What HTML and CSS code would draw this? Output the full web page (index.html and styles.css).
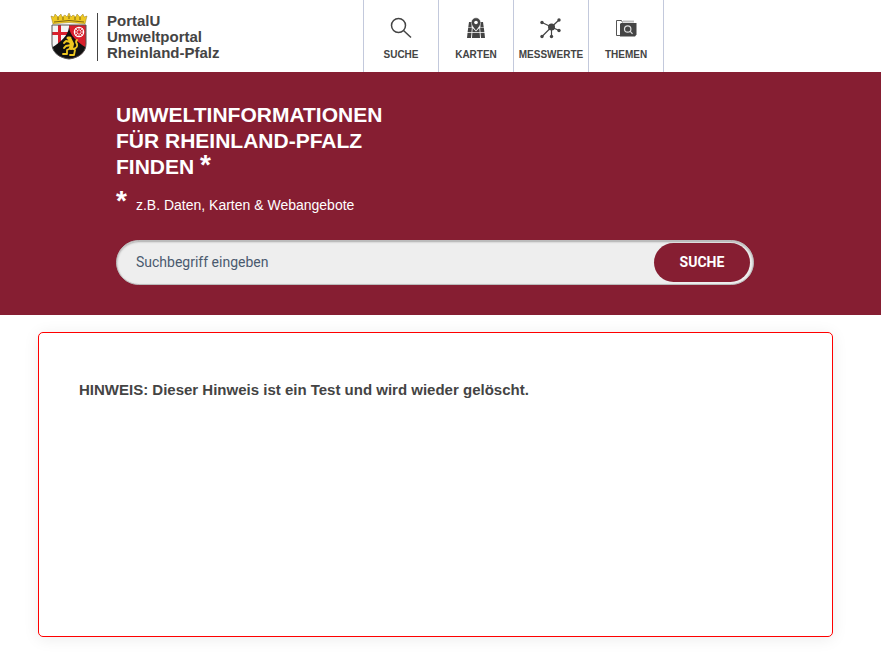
FILE: index.html
```html
<!DOCTYPE html>
<html lang="de">
<head>
<meta charset="utf-8">
<meta name="viewport" content="width=device-width, initial-scale=1">
<title>PortalU Umweltportal Rheinland-Pfalz</title>
<link rel="stylesheet" href="styles.css">
</head>
<body>
<header class="header">
  <a class="brand" href="#">
    <svg class="crest" viewBox="0 1 38 48" aria-hidden="true">
      <defs>
        <clipPath id="shield"><path d="M2 13H36V32C36 41 28 46 19 47C10 46 2 41 2 32Z"/></clipPath>
      </defs>
      <g clip-path="url(#shield)">
        <path fill="#f4f4f4" d="M0 12H19V48H0Z"/>
        <path fill="#d8202c" d="M19 12H38V48H19ZM8 12H11V48H8ZM0 20H19V23H0Z"/>
        <path fill="#111" d="M19 15C18 24 10 31 1 36V48H37V36C28 31 20 24 19 15Z"/>
      </g>
      <path fill="none" stroke="#555" stroke-width="1" d="M2 13H36V32C36 41 28 46 19 47C10 46 2 41 2 32Z"/>
      <g fill="none" stroke="#fff"><circle cx="29" cy="20" r="4.600" stroke-width="1.300"/><path stroke-width=".8" d="M29 15V25M24 20H34M25.500 16.500L32.500 23.500M32.500 16.500L25.500 23.500"/></g>
      <circle cx="29" cy="20" r="1.200" fill="#d8202c"/>
      <path fill="#efc820" stroke="#806810" stroke-width=".4" d="M3 12L1 4L4 5L5 2L8 5L11 2L12 5L15 3L17 5L19 1L21 5L23 3L26 5L27 2L30 5L33 2L34 5L37 4L35 12Q19 9 3 12Z"/>
      <path fill="none" stroke="#6e590e" stroke-width=".9" d="M4 10Q19 7 34 10M8 5V8M13 5V8M19 4V7M25 5V8M30 5V8"/>
      <g fill="none" stroke="#efc820" stroke-linecap="round" stroke-linejoin="round">
        <path stroke-width="4" d="M20 28L22 32L21 36"/>
        <path stroke-width="1.800" d="M21 30L16 29L14 31M21 33L16 34L14 36M21 36L17 38L17 42L13 42M22 36L25 38L24 43H20M23 37Q28 36 27 32Q25 30 27 28"/>
        <path stroke-width="3" d="M18 26H20"/>
      </g>
    </svg>
    <span class="brand-name">PortalU<br>Umweltportal<br>Rheinland-Pfalz</span>
  </a>
  <nav class="nav" aria-label="Hauptnavigation">
    <a class="nav-item" href="#">
      <svg class="nav-icon" viewBox="0 0 22 22" aria-hidden="true"><g fill="none" stroke="#444" stroke-width="1.500"><circle cx="8.500" cy="8.500" r="7"/><path d="M13.500 13.500L21 20.500"/></g></svg>
      <span>SUCHE</span>
    </a>
    <a class="nav-item" href="#">
      <svg class="nav-icon" viewBox="0 0 22 22" aria-hidden="true">
        <path fill="#444" d="M4 5H7L6.500 10H3.300ZM15 5H18L18.700 10H15.500ZM3.200 10.600H6.900L6.500 15.200H2.600ZM15.100 10.600H18.800L19.400 15.200H15.500ZM2.500 16H6.500L6 21H2ZM7.300 16H14.700L15 21H7ZM15.500 16H19.500L20 21H16ZM7.700 11L11 14.500L14.300 11L14.700 15.200H7.300Z"/>
        <path fill="#444" stroke="#fff" stroke-width=".5" d="M11 14C8 10 6.300 8 6.300 5.500A4.700 4.700 0 0 1 15.700 5.500C15.700 8 14 10 11 14Z"/>
        <circle cx="11" cy="5.500" r="1.800" fill="#fff"/>
      </svg>
      <span>KARTEN</span>
    </a>
    <a class="nav-item" href="#">
      <svg class="nav-icon" viewBox="0 0 22 22" aria-hidden="true">
        <path stroke="#444" stroke-width="1.200" d="M11.500 10L2 5.500M11.500 10L19 3M11.500 10L19 13.500M11.500 10V19.500M11.500 10L2 19.500"/>
        <g fill="#444"><circle cx="11.500" cy="10" r="3.500"/><circle cx="2" cy="5.500" r="1.700"/><circle cx="19" cy="3" r="1.700"/><circle cx="19" cy="13.500" r="1.700"/><circle cx="11.500" cy="19.500" r="1.700"/><circle cx="2" cy="19.500" r="1.700"/></g>
      </svg>
      <span>MESSWERTE</span>
    </a>
    <a class="nav-item" href="#">
      <svg class="nav-icon" viewBox="0 0 22 22" aria-hidden="true">
        <path fill="#bbb" d="M8 3.500H19V5.500H8Z"/>
        <path fill="none" stroke="#555" stroke-width="1" d="M6 18.500H1.500V3.500H6.500L7.500 5.500"/>
        <path fill="#444" d="M6 6H21.500V17.500L20 19.500H5V7Z"/>
        <g fill="none" stroke="#ddd" stroke-width="1.200"><circle cx="12.700" cy="12" r="3.200"/><path d="M15 14.200L17.500 16.800"/></g>
      </svg>
      <span>THEMEN</span>
    </a>
  </nav>
</header>
<main>
  <section class="hero">
    <h1 class="hero-title">UMWELTINFORMATIONEN<br>FÜR RHEINLAND-PFALZ<br>FINDEN <span class="star">*</span></h1>
    <p class="hero-note"><span class="star">*</span><span>z.B. Daten, Karten &amp; Webangebote</span></p>
    <form class="search">
      <input class="search-input" type="text" placeholder="Suchbegriff eingeben" aria-label="Suchbegriff eingeben">
      <button class="search-button" type="button">SUCHE</button>
    </form>
  </section>
  <section class="notice">
    <p>HINWEIS: Dieser Hinweis ist ein Test und wird wieder gelöscht.</p>
  </section>
</main>
</body>
</html>
```
FILE: styles.css
```css
* {
  box-sizing: border-box;
}

body {
  margin: 0;
  background: #fff;
  color: #444;
  font-family: "Liberation Sans", Arial, sans-serif;
}

a {
  color: inherit;
  text-decoration: none;
}

.header {
  display: flex;
  height: 72px;
  padding-left: 50px;
}

.brand {
  display: flex;
  align-items: flex-start;
  width: 313px;
  padding-top: 13px;
}

.crest {
  width: 38px;
  height: 48px;
}

.brand-name {
  margin-left: 9px;
  padding-left: 9px;
  border-left: 1px solid #444;
  font-size: 15px;
  font-weight: 700;
  line-height: 16px;
}

.nav {
  display: flex;
  border-left: 1px solid #c3c9dc;
}

.nav-item {
  display: flex;
  flex-direction: column;
  align-items: center;
  gap: 10px;
  width: 75px;
  padding-top: 17px;
  border-right: 1px solid #c3c9dc;
  font-size: 10px;
  font-weight: 700;
  line-height: 12px;
}

.nav-icon {
  width: 22px;
  height: 22px;
}

.hero {
  padding: 30px 127px 30px 116px;
  background: #861e32;
  color: #fff;
}

.hero-title {
  margin: 0;
  font-size: 21px;
  font-weight: 700;
  line-height: 26px;
}

.star {
  font-size: 28px;
  font-weight: 700;
  line-height: 20px;
}

.hero-note {
  display: flex;
  align-items: baseline;
  gap: 9px;
  margin: 11px 0 24px;
  font-size: 14px;
  line-height: 22px;
}

.search {
  display: flex;
  height: 45px;
  padding: 2px 3px;
  border: 1px solid #bbb;
  border-radius: 23px;
  background: #eee;
  box-shadow: inset 0 1px 2px #aaa;
}

.search-input {
  flex: 1;
  min-width: 0;
  padding: 0 16px 2px;
  border: 0;
  outline: 0;
  background: transparent;
  color: #444;
  font: 14px Roboto, sans-serif;
}

.search-input::placeholder {
  color: #4a5a6e;
  opacity: 1;
}

.search-button {
  width: 96px;
  padding: 0 0 2px;
  border: 0;
  border-radius: 20px;
  background: #861e32;
  color: #fff;
  font: 700 14px Roboto, sans-serif;
}

.notice {
  min-height: 305px;
  margin: 17px 48px 29px 38px;
  padding: 47px 40px;
  border: 1px solid #f00;
  border-radius: 5px;
  background: #fff;
  box-shadow: 0 2px 16px rgba(0, 0, 0, 0.08);
  font-size: 15px;
  font-weight: 700;
  line-height: 20px;
}

.notice p {
  margin: 0;
}
```
